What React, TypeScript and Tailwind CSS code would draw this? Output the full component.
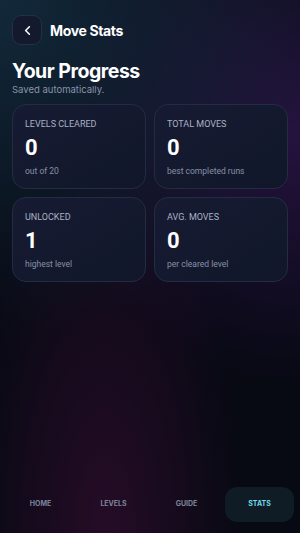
import { ChevronLeft } from 'lucide-react'

const STATS = [
  { label: 'Levels Cleared', value: '0', sub: 'out of 20' },
  { label: 'Total Moves', value: '0', sub: 'best completed runs' },
  { label: 'Unlocked', value: '1', sub: 'highest level' },
  { label: 'Avg. Moves', value: '0', sub: 'per cleared level' },
]

const TABS = ['Home', 'Levels', 'Guide', 'Stats']

export default function App() {
  return (
    <div
      className="relative flex h-[533px] w-[300px] flex-col overflow-hidden bg-[#070913] bg-[radial-gradient(circle_at_0%_0%,rgba(22,52,72,0.75),transparent_55%),radial-gradient(circle_at_100%_25%,rgba(62,26,98,0.55),transparent_50%),radial-gradient(ellipse_at_35%_100%,rgba(58,14,52,0.6),transparent_50%)] text-white"
      style={{ fontFamily: 'Inter, Roboto, "Noto Sans", sans-serif' }}
    >
      <div className="flex items-center gap-2 px-3 pt-[15px]">
        <button className="flex h-[30px] w-[30px] items-center justify-center rounded-[9px] border border-[#233046] bg-[#141a2e]">
          <ChevronLeft size={15} strokeWidth={2.5} className="text-white" />
        </button>
        <h1 className="text-[14px] font-bold tracking-tight">Move Stats</h1>
      </div>

      <div className="px-3 pt-[13px]">
        <h2 className="text-[19.5px] font-bold leading-[26px] tracking-tight">Your Progress</h2>
        <p className="text-[9.5px] leading-[12px] text-[#8a93a8]">Saved automatically.</p>
      </div>

      <div className="grid grid-cols-2 gap-2 px-3 pt-[8px]">
        {STATS.map(s => (
          <div key={s.label} className="h-[85px] rounded-[14px] border border-[#232c44] bg-gradient-to-br from-[#161b33] to-[#111729] px-3 pt-[13px]" style={{ fontFamily: 'Roboto, Inter, sans-serif' }}>
            <p className="text-[9px] uppercase leading-[12px] text-[#aab1c4]">{s.label}</p>
            <p className="mt-[5px] text-[22px] font-bold leading-[26px]">{s.value}</p>
            <p className="mt-[4px] text-[8.5px] leading-[12px] text-[#8890a6]">{s.sub}</p>
          </div>
        ))}
      </div>

      <nav className="mt-auto grid grid-cols-4 gap-[4px] px-[6px] pb-[11px]">
        {TABS.map(t => {
          const active = t === 'Stats'
          return (
            <div
              key={t}
              className={`flex h-[35px] items-center justify-center rounded-[12px] text-[7px] font-bold uppercase ${active ? 'bg-[#0f1b25] text-[#6fd8e8]' : 'text-[#7c849b]'}`}
            >
              {t}
            </div>
          )
        })}
      </nav>
    </div>
  )
}
